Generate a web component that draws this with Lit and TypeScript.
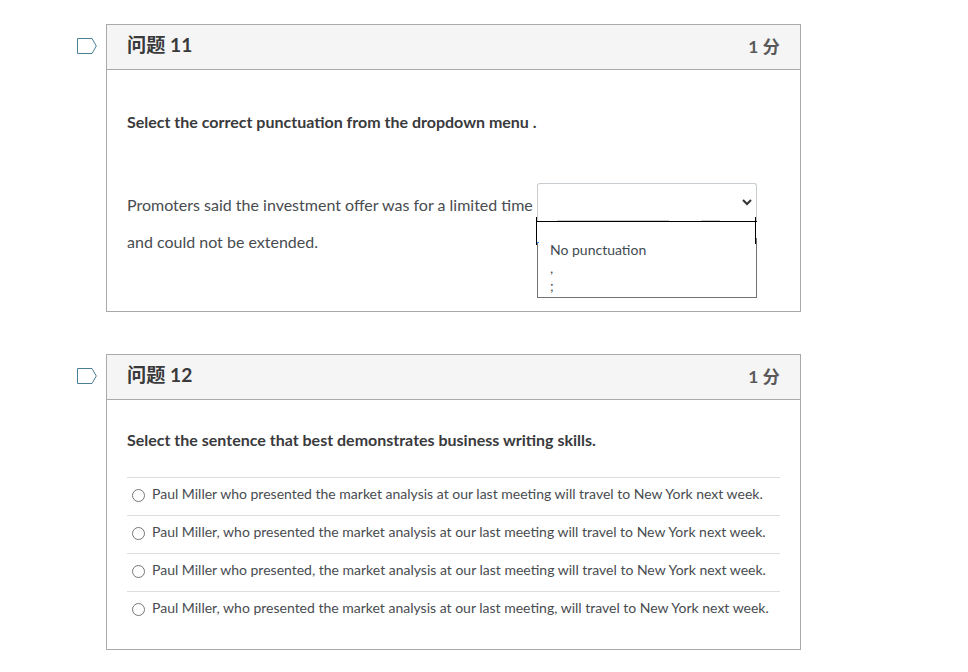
import { LitElement, html, css } from "lit";
import { customElement, property } from "lit/decorators.js";

@customElement("question-card")
class QuestionCard extends LitElement {
  @property() heading = "";
  @property() points = "";

  static styles = css`
    :host { display: flex; align-items: flex-start; }
    .flag { display: block; width: 20px; height: 16px; margin: 14px 9px 0 0; flex: none; }
    .card {
      box-sizing: border-box; width: 695px; height: var(--card-height);
      border: 1px solid #aaa; background: #fff;
    }
    .header {
      box-sizing: border-box; height: 45px; padding: 0 20px;
      display: flex; justify-content: space-between;
      background: #f5f5f5; border-bottom: 1px solid #aaa;
      font-weight: 700; white-space: nowrap;
    }
    .title { font-size: 19.2px; line-height: 40px; color: #3a3a3c; }
    .points { font-size: 17.4px; line-height: 44px; color: #595959; }
    .body { padding: 0 20px; }
  `;

  render() {
    return html`
      <svg class="flag" viewBox="0 0 20 16">
        <path d="M.5 .5H15L19.3 8L15 15.5H.5Z" fill="#fff" stroke="#4a7f96" />
      </svg>
      <section class="card">
        <header class="header">
          <span class="title">${this.heading}</span>
          <span class="points">${this.points}</span>
        </header>
        <div class="body"><slot></slot></div>
      </section>
    `;
  }
}

@customElement("punctuation-select")
class PunctuationSelect extends LitElement {
  static styles = css`
    :host { display: block; position: relative; width: 220px; height: 115px; }
    .field {
      box-sizing: border-box; height: 38px; padding: 14px 4px 0 0;
      display: flex; justify-content: flex-end;
      border: 1px solid #c7cdd1; border-bottom: 0; border-radius: 3px 3px 0 0;
    }
    .chevron { width: 10px; height: 8px; display: block; }
    .menu {
      box-sizing: border-box; height: 77px; padding: 20px 12px 0;
      border: 1px solid #737373; border-top: 0;
      font-size: 14px; line-height: 18px; color: #3f4a50;
    }
    .option { height: 18px; }
    .outline { position: absolute; left: -1px; top: 34px; width: 221px; height: 28px; }
  `;

  render() {
    return html`
      <div class="field">
        <svg class="chevron" viewBox="0 0 10 8">
          <path d="M1 2L5 6L9 2" fill="none" stroke="#333" stroke-width="2" />
        </svg>
      </div>
      <div class="menu">
        ${["No punctuation", ",", ";"].map((o) => html`<div class="option">${o}</div>`)}
      </div>
      <svg class="outline" viewBox="0 0 221 28" shape-rendering="crispEdges">
        <path d="M1 5h1v20h-1zM219 5h2v16h-2z" fill="#fff" />
        <path d="M21 3.5H133M165 3.5H184" stroke="#c7cdd1" />
        <path d="M.5 0V28M219.5 0V27M0 4.5H221" fill="none" stroke="#000" />
        <path d="M1 25.5h2" stroke="#1e90ff" />
      </svg>
    `;
  }
}

@customElement("app-root")
class AppRoot extends LitElement {
  static styles = css`
    :host {
      display: flex; flex-direction: column; gap: 42px;
      box-sizing: border-box; height: 672px; padding: 24px 0 0 77px; overflow: hidden;
      background: #fff; color: #484c50;
      font-family: Lato, "Noto Sans CJK SC", sans-serif; font-size: 16px;
    }
    .first { --card-height: 288px; }
    .second { --card-height: 296px; }
    .prompt { margin: 0; font-weight: 700; line-height: 24px; color: #3a3a3c; white-space: nowrap; }
    .first .prompt { padding-top: 40px; }
    .second .prompt { padding-top: 28px; }
    .sentence { display: flex; margin-top: 49px; }
    .text { width: 410px; padding-top: 3px; line-height: 37px; white-space: nowrap; }
    .answers { margin-top: 25px; }
    .answer {
      box-sizing: border-box; height: 38px; padding-left: 5px;
      display: flex; border-top: 1px solid #ddd;
      font-size: 14px; line-height: 32px; white-space: nowrap;
    }
    .radio {
      box-sizing: border-box; width: 13px; height: 13px; margin: 11px 7px 0 0; flex: none;
      border: 1px solid #767676; border-radius: 50%;
    }
  `;

  private answers = [
    "Paul Miller who presented the market analysis at our last meeting will travel to New York next week.",
    "Paul Miller, who presented the market analysis at our last meeting will travel to New York next week.",
    "Paul Miller who presented, the market analysis at our last meeting will travel to New York next week.",
    "Paul Miller, who presented the market analysis at our last meeting, will travel to New York next week.",
  ];

  render() {
    return html`
      <question-card class="first" heading="问题 11" points="1 分">
        <p class="prompt">Select the correct punctuation from the dropdown menu .</p>
        <div class="sentence">
          <div class="text">Promoters said the investment offer was for a limited time<br />and could not be extended.</div>
          <punctuation-select></punctuation-select>
        </div>
      </question-card>
      <question-card class="second" heading="问题 12" points="1 分">
        <p class="prompt">Select the sentence that best demonstrates business writing skills.</p>
        <div class="answers">
          ${this.answers.map((a) => html`<label class="answer"><span class="radio"></span><span>${a}</span></label>`)}
        </div>
      </question-card>
    `;
  }
}
